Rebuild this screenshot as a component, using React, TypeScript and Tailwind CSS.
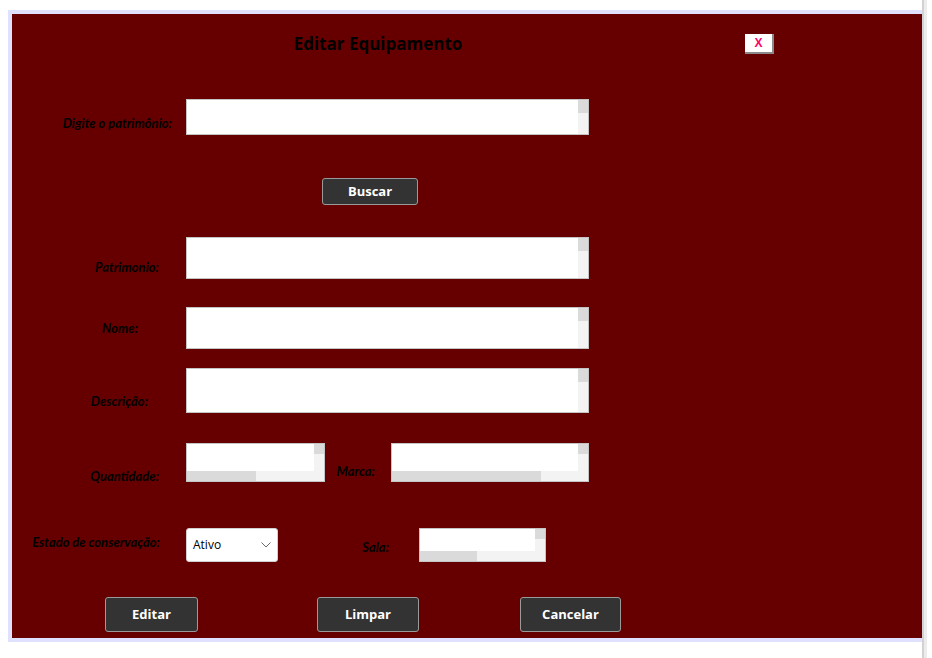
import React from 'react'

// fake Windows-style textarea with its scroll tracks
function FakeArea({ className, thumb }: { className: string; thumb?: string }) {
  return (
    <div className={`flex flex-col border border-[#c4c4c4] bg-white ${className}`}>
      <div className="flex flex-1">
        <div className="flex-1 bg-white" />
        <div className="flex w-[10px] flex-col">
          <div className={thumb ? 'h-[10px] bg-[#dadada]' : 'h-[13px] bg-[#dadada]'} />
          <div className="flex-1 bg-[#f3f3f3]" />
        </div>
      </div>
      {thumb && (
        <div className="flex h-[10px]">
          <div className={`bg-[#dadada] ${thumb}`} />
          <div className="flex-1 bg-[#f3f3f3]" />
        </div>
      )}
    </div>
  )
}

function Label({ children, className }: { children: React.ReactNode; className: string }) {
  return (
    <div
      className={`text-right text-[13px] font-bold italic leading-4 text-black ${className}`}
      style={{ fontFamily: 'Lato, "Open Sans", sans-serif' }}
    >
      {children}
    </div>
  )
}

function DarkButton({ children, className }: { children: React.ReactNode; className: string }) {
  return (
    <button
      className={`flex items-center justify-center rounded-[3px] border border-[#9a9a9a] bg-[#333333] pt-[1px] text-[13px] font-bold text-white ${className}`}
      style={{ fontFamily: '"Open Sans", "Noto Sans", sans-serif' }}
    >
      {children}
    </button>
  )
}

export default function App() {
  return (
    <div className="flex h-[658px] w-[932px] overflow-hidden bg-white">
      <div className="w-[922px] pl-2 pt-[10px]">
        <div className="flex flex-col border-y-4 border-l-4 border-[#e0e0ff] bg-[#660000] pb-[6px]">
          {/* title */}
          <div className="mt-[18px] flex h-[23px] items-start">
            <div
              className="ml-[216px] w-[300px] text-center text-[17px] font-bold leading-[23px] text-black"
              style={{ fontFamily: '"Open Sans", "Noto Sans", sans-serif' }}
            >
              Editar Equipamento
            </div>
            <button
              className="ml-[217px] mt-[2px] flex h-[20px] w-[29px] items-center justify-center border-r-2 border-b-2 border-[#8a8a8a] bg-white text-[12px] font-bold text-[#ff0066]"
              style={{ fontFamily: '"Liberation Sans", sans-serif' }}
            >
              X
            </button>
          </div>

          {/* patrimônio search */}
          <div className="mt-[44px] flex items-end">
            <Label className="w-[174px] pb-[4px] pr-[14px]">Digite o patrimônio:</Label>
            <FakeArea className="h-[36px] w-[403px]" />
          </div>

          <DarkButton className="ml-[310px] mt-[43px] h-[27px] w-[96px]">Buscar</DarkButton>

          <div className="mt-[32px] flex items-end">
            <Label className="w-[174px] pb-[4px] pr-[27px]">Patrimonio:</Label>
            <FakeArea className="h-[42px] w-[403px]" />
          </div>

          <div className="mt-[28px] flex items-center">
            <Label className="w-[174px] pr-[48px]">Nome:</Label>
            <FakeArea className="h-[42px] w-[403px]" />
          </div>

          <div className="mt-[19px] flex items-end">
            <Label className="w-[174px] pb-[4px] pr-[38px]">Descrição:</Label>
            <FakeArea className="h-[45px] w-[403px]" />
          </div>

          <div className="mt-[30px] flex items-end">
            <Label className="w-[174px] translate-y-[2px] pr-[27px]">Quantidade:</Label>
            <FakeArea className="h-[39px] w-[139px]" thumb="w-[69px]" />
            <Label className="w-[66px] pb-[3px] pr-[16px]">Marca:</Label>
            <FakeArea className="h-[39px] w-[198px]" thumb="w-[149px]" />
          </div>

          <div className="mt-[46px] flex items-end">
            <Label className="w-[174px] pb-[12px] pr-[26px]">Estado de conservação:</Label>
            <div
              className="flex h-[34px] w-[92px] items-center justify-between rounded-[3px] border border-[#d0d0d0] bg-white pl-[6px] pr-[6px] text-[12px] text-black"
              style={{ fontFamily: '"Open Sans", "Noto Sans", sans-serif' }}
            >
              <span>Ativo</span>
              <svg width="10" height="6" viewBox="0 0 10 6" fill="none">
                <path d="M0.5 0.5 L5 5 L9.5 0.5" stroke="#6b6b6b" strokeWidth="1" />
              </svg>
            </div>
            <Label className="w-[141px] pb-[7px] pr-[30px]">Sala:</Label>
            <FakeArea className="h-[34px] w-[127px]" thumb="w-[57px]" />
          </div>

          <div className="mt-[35px] flex">
            <DarkButton className="ml-[93px] h-[35px] w-[93px]">Editar</DarkButton>
            <DarkButton className="ml-[119px] h-[35px] w-[102px]">Limpar</DarkButton>
            <DarkButton className="ml-[101px] h-[35px] w-[101px]">Cancelar</DarkButton>
          </div>
        </div>
      </div>
      {/* page scrollbar edge */}
      <div className="flex h-full">
        <div className="w-[2px] bg-[#d2d2d2]" />
        <div className="w-[3px] bg-[#ececec]" />
      </div>
    </div>
  )
}
